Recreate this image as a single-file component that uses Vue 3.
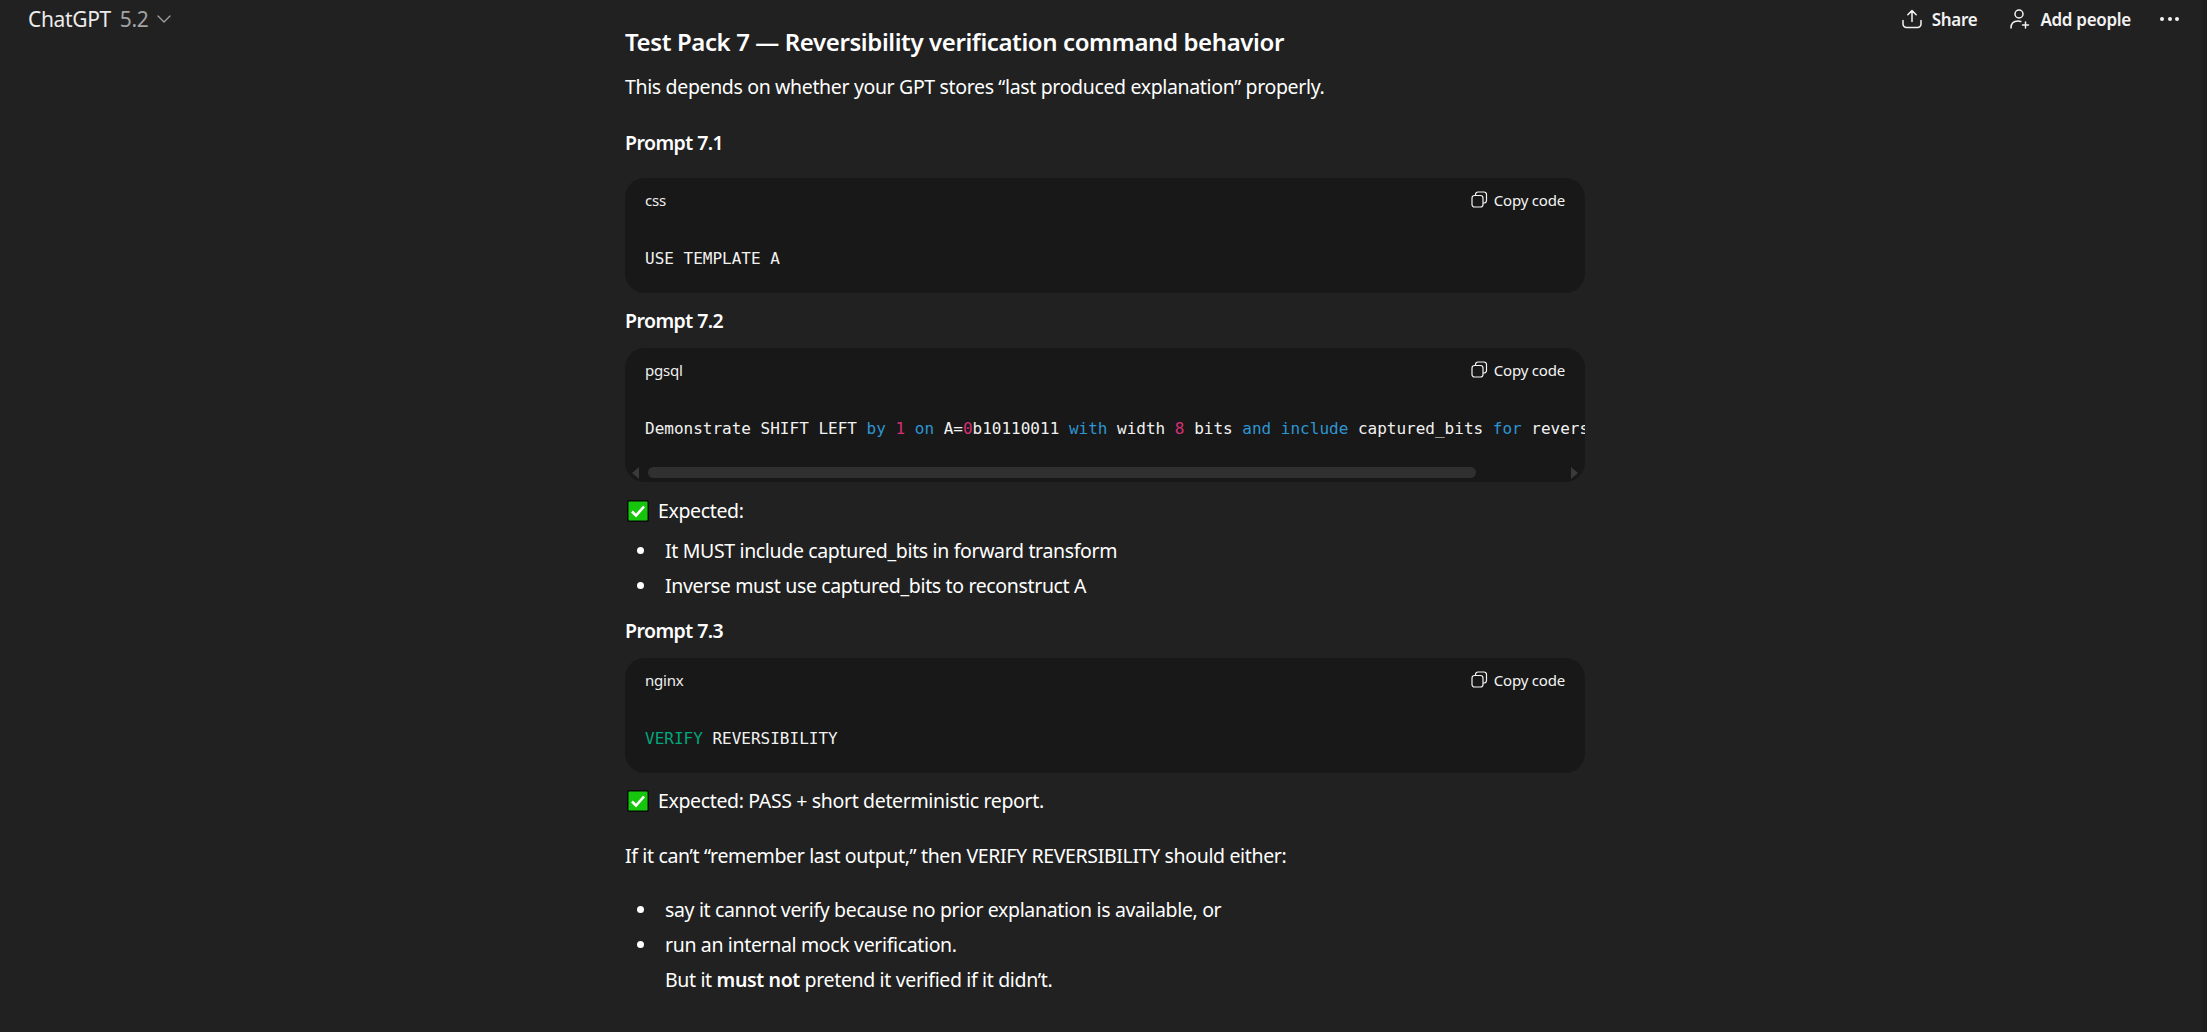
<script setup>
const blocks = {
  a: { lang: 'css', parts: [{ t: 'USE TEMPLATE A' }] },
  b: {
    lang: 'pgsql',
    parts: [
      { t: 'Demonstrate SHIFT LEFT ' }, { t: 'by', c: 'kw' }, { t: ' ' }, { t: '1', c: 'num' }, { t: ' ' }, { t: 'on', c: 'kw' },
      { t: ' A=' }, { t: '0', c: 'num' }, { t: 'b10110011 ' }, { t: 'with', c: 'kw' }, { t: ' width ' }, { t: '8', c: 'num' },
      { t: ' bits ' }, { t: 'and', c: 'kw' }, { t: ' ' }, { t: 'include', c: 'kw' }, { t: ' captured_bits ' }, { t: 'for', c: 'kw' },
      { t: ' reversibility.' }
    ]
  },
  c: { lang: 'nginx', parts: [{ t: 'VERIFY', c: 'grn' }, { t: ' REVERSIBILITY' }] }
}
</script>

<template>
  <div class="page">
    <header class="top">
      <div class="brand">
        <span>ChatGPT</span>
        <span class="ver">5.2</span>
        <svg class="chev" width="14" height="14" viewBox="0 0 14 14" fill="none" stroke="currentColor" stroke-width="1.3" stroke-linecap="round" stroke-linejoin="round"><path d="M1 4 7 10l6-6" /></svg>
      </div>
      <div class="actions">
        <button class="act">
          <svg width="20" height="20" viewBox="0 0 20 20" fill="none" stroke="currentColor" stroke-width="1.5" stroke-linecap="round" stroke-linejoin="round"><path d="M10 12.500V1.800M5.800 5.800 10 1.600l4.200 4.200M1 11.500v3.500a3.500 3.500 0 0 0 3.500 3.500h11a3.500 3.500 0 0 0 3.500-3.500v-3.500" /></svg>
          <span>Share</span>
        </button>
        <button class="act add">
          <svg width="20" height="20" viewBox="0 0 20 20" fill="none" stroke="currentColor" stroke-width="1.5" stroke-linecap="round" stroke-linejoin="round"><circle cx="9" cy="5" r="4" /><path d="M1 19c0-4.500 2.500-7 7-7 1 0 2 .2 2.800.5M15.500 13v6M12.500 16h6" /></svg>
          <span>Add people</span>
        </button>
        <button class="dots" aria-label="More"><i></i><i></i><i></i></button>
      </div>
    </header>

    <main class="thread">
      <h3 class="h-pack">Test Pack 7 — Reversibility verification command behavior</h3>
      <p class="intro">This depends on whether your GPT stores “last produced explanation” properly.</p>

      <p class="prompt first">Prompt 7.1</p>
      <section class="code c-first">
        <div class="code-head">
          <span>{{ blocks.a.lang }}</span>
          <span class="copy">
            <svg width="17" height="17" viewBox="0 0 17 17" fill="none" stroke="currentColor" stroke-width="1.2"><rect x="1" y="4.500" width="11" height="11.500" rx="2.500" /><path d="M4.500 4.500V3.500a2.500 2.500 0 0 1 2.500-2.500h6a2.500 2.500 0 0 1 2.500 2.500v6a2.500 2.500 0 0 1-2.500 2.500H12" /></svg>
            Copy code
          </span>
        </div>
        <pre class="code-body"><span v-for="(p, i) in blocks.a.parts" :key="i" :class="p.c">{{ p.t }}</span></pre>
      </section>

      <p class="prompt p2">Prompt 7.2</p>
      <section class="code">
        <div class="code-head">
          <span>{{ blocks.b.lang }}</span>
          <span class="copy">
            <svg width="17" height="17" viewBox="0 0 17 17" fill="none" stroke="currentColor" stroke-width="1.2"><rect x="1" y="4.500" width="11" height="11.500" rx="2.500" /><path d="M4.500 4.500V3.500a2.500 2.500 0 0 1 2.500-2.500h6a2.500 2.500 0 0 1 2.500 2.500v6a2.500 2.500 0 0 1-2.500 2.500H12" /></svg>
            Copy code
          </span>
        </div>
        <pre class="code-body scrolls"><span v-for="(p, i) in blocks.b.parts" :key="i" :class="p.c">{{ p.t }}</span></pre>
        <div class="bar">
          <i class="arrow left"></i>
          <div class="track"><div class="thumb"></div></div>
          <i class="arrow right"></i>
        </div>
      </section>

      <p class="exp e1">
        <svg class="tick" width="22" height="22" viewBox="0 0 22 22"><rect x=".75" y=".75" width="20.500" height="20.500" rx="1.500" fill="#16c60c" stroke="#0a0a0a" stroke-width="1.500" /><path d="M5 11.500l4 4 8-9" fill="none" stroke="#fff" stroke-width="2.600" /></svg>
        Expected:
      </p>
      <ul class="list l1">
        <li>It MUST include captured_bits in forward transform</li>
        <li>Inverse must use captured_bits to reconstruct A</li>
      </ul>

      <p class="prompt p3">Prompt 7.3</p>
      <section class="code">
        <div class="code-head">
          <span>{{ blocks.c.lang }}</span>
          <span class="copy">
            <svg width="17" height="17" viewBox="0 0 17 17" fill="none" stroke="currentColor" stroke-width="1.2"><rect x="1" y="4.500" width="11" height="11.500" rx="2.500" /><path d="M4.500 4.500V3.500a2.500 2.500 0 0 1 2.500-2.500h6a2.500 2.500 0 0 1 2.500 2.500v6a2.500 2.500 0 0 1-2.500 2.500H12" /></svg>
            Copy code
          </span>
        </div>
        <pre class="code-body"><span v-for="(p, i) in blocks.c.parts" :key="i" :class="p.c">{{ p.t }}</span></pre>
      </section>

      <p class="exp e2">
        <svg class="tick" width="22" height="22" viewBox="0 0 22 22"><rect x=".75" y=".75" width="20.500" height="20.500" rx="1.500" fill="#16c60c" stroke="#0a0a0a" stroke-width="1.500" /><path d="M5 11.500l4 4 8-9" fill="none" stroke="#fff" stroke-width="2.600" /></svg>
        Expected: PASS + short deterministic report.
      </p>
      <p class="para">If it can’t “remember last output,” then VERIFY REVERSIBILITY should either:</p>
      <ul class="list l2">
        <li>say it cannot verify because no prior explanation is available, or</li>
        <li>run an internal mock verification.<br />But it <strong>must not</strong> pretend it verified if it didn’t.</li>
      </ul>
    </main>
    <div class="rail"></div>
  </div>
</template>

<style>
html, body { margin: 0; background: #212121; }
</style>

<style scoped>
.page {
  position: relative;
  height: 1032px;
  overflow: hidden;
  background: #212121;
  color: #fff;
  font-family: "Noto Sans", "Open Sans", sans-serif;
  font-size: 19.5px;
  line-height: 35px;
  letter-spacing: -0.35px;
}
.rail { position: absolute; top: 0; right: 0; bottom: 0; width: 4px; background: #1e1e1e; }
.top {
  position: absolute;
  inset: 0 0 auto 0;
  height: 38px;
  display: flex;
  align-items: center;
  justify-content: space-between;
  padding: 0 28px 0 28px;
}
.brand { display: flex; align-items: center; gap: 9px; font-size: 21px; color: #ececec; }
.ver { color: #a3a3a3; }
.chev { color: #a3a3a3; }
.actions { display: flex; align-items: center; }
.act {
  display: flex; align-items: center; gap: 10px;
  background: none; border: 0; padding: 0; color: #f2f2f2;
  font: inherit; font-size: 17px; font-weight: 600; letter-spacing: -0.3px;
}
.add { margin-left: 33px; }
.dots { display: flex; gap: 3.500px; margin-left: 29px; background: none; border: 0; padding: 0; }
.dots i { width: 4px; height: 4px; border-radius: 50%; background: #f2f2f2; }
.thread { width: 960px; margin: 0 auto; padding-top: 23px; position: relative; left: 1.5px; }
.h-pack { margin: 0; font-size: 24px; line-height: 38px; font-weight: 600; letter-spacing: -0.39px; }
.intro { margin: 8px 0 0; }
.prompt { margin: 0; font-weight: 600; letter-spacing: -0.55px; }
.prompt.first { margin-top: 21px; }
.p2 { margin-top: 10px; }
.p3 { margin-top: 10px; }
.code { margin-top: 10px; background: #181818; border-radius: 20px; overflow: hidden; }
.c-first { margin-top: 18px; }
.code-head {
  display: flex; justify-content: space-between; align-items: center;
  height: 43px; padding: 0 20px 2px;
  font-size: 15px; line-height: 20px; color: #f0f0f0; letter-spacing: -0.2px;
}
.copy { display: flex; align-items: center; gap: 6px; color: #f4f4f4; }
.code-body {
  margin: 0; padding: 25px 20px 23px;
  font-family: "DejaVu Sans Mono", "Liberation Mono", monospace;
  font-size: 16px; line-height: 22px; letter-spacing: 0; color: #f2f2f2;
  overflow-x: auto; scrollbar-width: none; white-space: pre;
}
.code-body.scrolls { padding-bottom: 27px; }
.kw { color: #2e95d3; }
.num { color: #d42f74; }
.grn { color: #00a67d; }
.bar { display: flex; align-items: center; height: 11px; padding: 0 7px 4px 7px; }
.arrow { width: 0; height: 0; border-top: 6px solid transparent; border-bottom: 6px solid transparent; }
.arrow.left { border-right: 7px solid #3a3a3a; }
.arrow.right { border-left: 7px solid #3a3a3a; }
.track { flex: 1; padding: 0 95px 0 9px; }
.thumb { height: 11px; border-radius: 6px; background: #303030; }
.exp { margin: 11px 0 0; display: flex; align-items: center; gap: 9px; padding-left: 2px; }
.exp.e2 { margin-top: 10px; }
.tick { flex: none; }
.para { margin: 20px 0 0; }
.list { margin: 0; padding: 0 0 0 40px; list-style: none; }
.l1 { margin-top: 5px; }
.l2 { margin-top: 19px; }
.list li { position: relative; margin: 0; }
.list li::before {
  content: ""; position: absolute; left: -28px; top: 14px;
  width: 7px; height: 7px; border-radius: 50%; background: #fff;
}
strong { font-weight: 600; }
</style>
